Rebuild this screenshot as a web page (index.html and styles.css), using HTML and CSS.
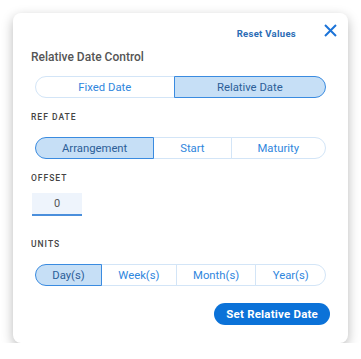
FILE: index.html
```html
<!DOCTYPE html>
<html lang="en">
<head>
    <meta charset="UTF-8">
    <meta name="viewport" content="width=device-width, initial-scale=1.0">
    <title>Relative Date Control</title>
    <link rel="stylesheet" href="styles.css">
</head>
<body>
    <div class="dialog">
        <div class="dialog-header">
            <a class="reset-link" href="#">Reset Values</a>
            <button class="close-btn" aria-label="Close">
                <svg width="13" height="13" viewBox="0 0 13 13">
                    <path d="M1 1 L12 12 M12 1 L1 12" stroke="#1c74d8" stroke-width="2" fill="none"/>
                </svg>
            </button>
        </div>

        <h2 class="dialog-title">Relative Date Control</h2>

        <div class="seg-group seg-mode">
            <button class="seg">Fixed Date</button>
            <button class="seg active">Relative Date</button>
        </div>

        <div class="field-label label-ref">REF DATE</div>
        <div class="seg-group">
            <button class="seg active">Arrangement</button>
            <button class="seg">Start</button>
            <button class="seg">Maturity</button>
        </div>

        <div class="field-label label-offset">OFFSET</div>
        <input class="offset-input" type="text" value="0">

        <div class="field-label label-units">UNITS</div>
        <div class="seg-group">
            <button class="seg active">Day(s)</button>
            <button class="seg">Week(s)</button>
            <button class="seg">Month(s)</button>
            <button class="seg">Year(s)</button>
        </div>

        <div class="dialog-footer">
            <button class="primary-btn">Set Relative Date</button>
        </div>
    </div>
</body>
</html>
```

FILE: styles.css
```css
body {
    margin: 0;
    padding: 13px 13px 0 13px;
    background-color: #ffffff;
    font-family: Roboto, "Liberation Sans", Arial, sans-serif;
}
.dialog {
    width: 335px;
    height: 330px;
    box-sizing: border-box;
    padding: 11px 18px 18px 18px;
    background-color: white;
    border-radius: 8px;
    box-shadow: 0 4px 12px rgba(0,0,0,0.28);
    display: flex;
    flex-direction: column;
}
.dialog-header {
    display: flex;
    justify-content: flex-end;
    align-items: flex-start;
    height: 16px;
    margin-right: -7px;
}
.reset-link {
    margin-top: 4px;
    line-height: 12px;
    font-size: 9.5px;
    letter-spacing: 0.3px;
    font-weight: bold;
    color: #2b6cb5;
    text-decoration: none;
    margin-right: 28px;
}
.close-btn {
    padding: 0;
    border: none;
    background: none;
    width: 13px;
    height: 13px;
    cursor: pointer;
}
.close-btn svg {
    display: block;
}
.dialog-title {
    margin: 9px 0 0 0;
    font-size: 12px;
    line-height: 16px;
    font-weight: 500;
    color: #555555;
}
.seg-group {
    display: flex;
    margin: 14px 4px 0 4px;
}
.seg-mode {
    margin-top: 11px;
}
.seg {
    flex: 1 1 auto;
    height: 22px;
    padding: 0 8px;
    margin-left: -1px;
    border: 1px solid #d3e5f7;
    background-color: white;
    color: #2f86dd;
    font-family: inherit;
    font-size: 11.3px;
    cursor: pointer;
    position: relative;
}
.seg:first-child {
    margin-left: 0;
    border-radius: 11px 0 0 11px;
}
.seg:last-child {
    border-radius: 0 11px 11px 0;
}
.seg.active {
    background-color: #c6dff6;
    border-color: #3a8be0;
    color: #2c5e98;
    z-index: 1;
}
.field-label {
    margin-top: 13px;
    font-size: 8.5px;
    line-height: 12px;
    letter-spacing: 1px;
    font-weight: 500;
    color: #444444;
}
.label-units {
    margin-top: 22px;
}
.offset-input {
    margin: 9px 0 0 1px;
    width: 50px;
    height: 23px;
    box-sizing: border-box;
    border: none;
    border-bottom: 2px solid #4a8fdc;
    background-color: #eef4fc;
    text-align: center;
    font-family: inherit;
    font-size: 11px;
    color: #555555;
    padding: 0;
}
.dialog-footer {
    display: flex;
    justify-content: flex-end;
    margin-top: 17px;
}
.primary-btn {
    height: 22px;
    padding: 0 12px;
    border: none;
    border-radius: 11px;
    background-color: #0b72d8;
    color: white;
    font-family: inherit;
    font-size: 11.5px;
    font-weight: bold;
    letter-spacing: 0.2px;
    cursor: pointer;
}
```
